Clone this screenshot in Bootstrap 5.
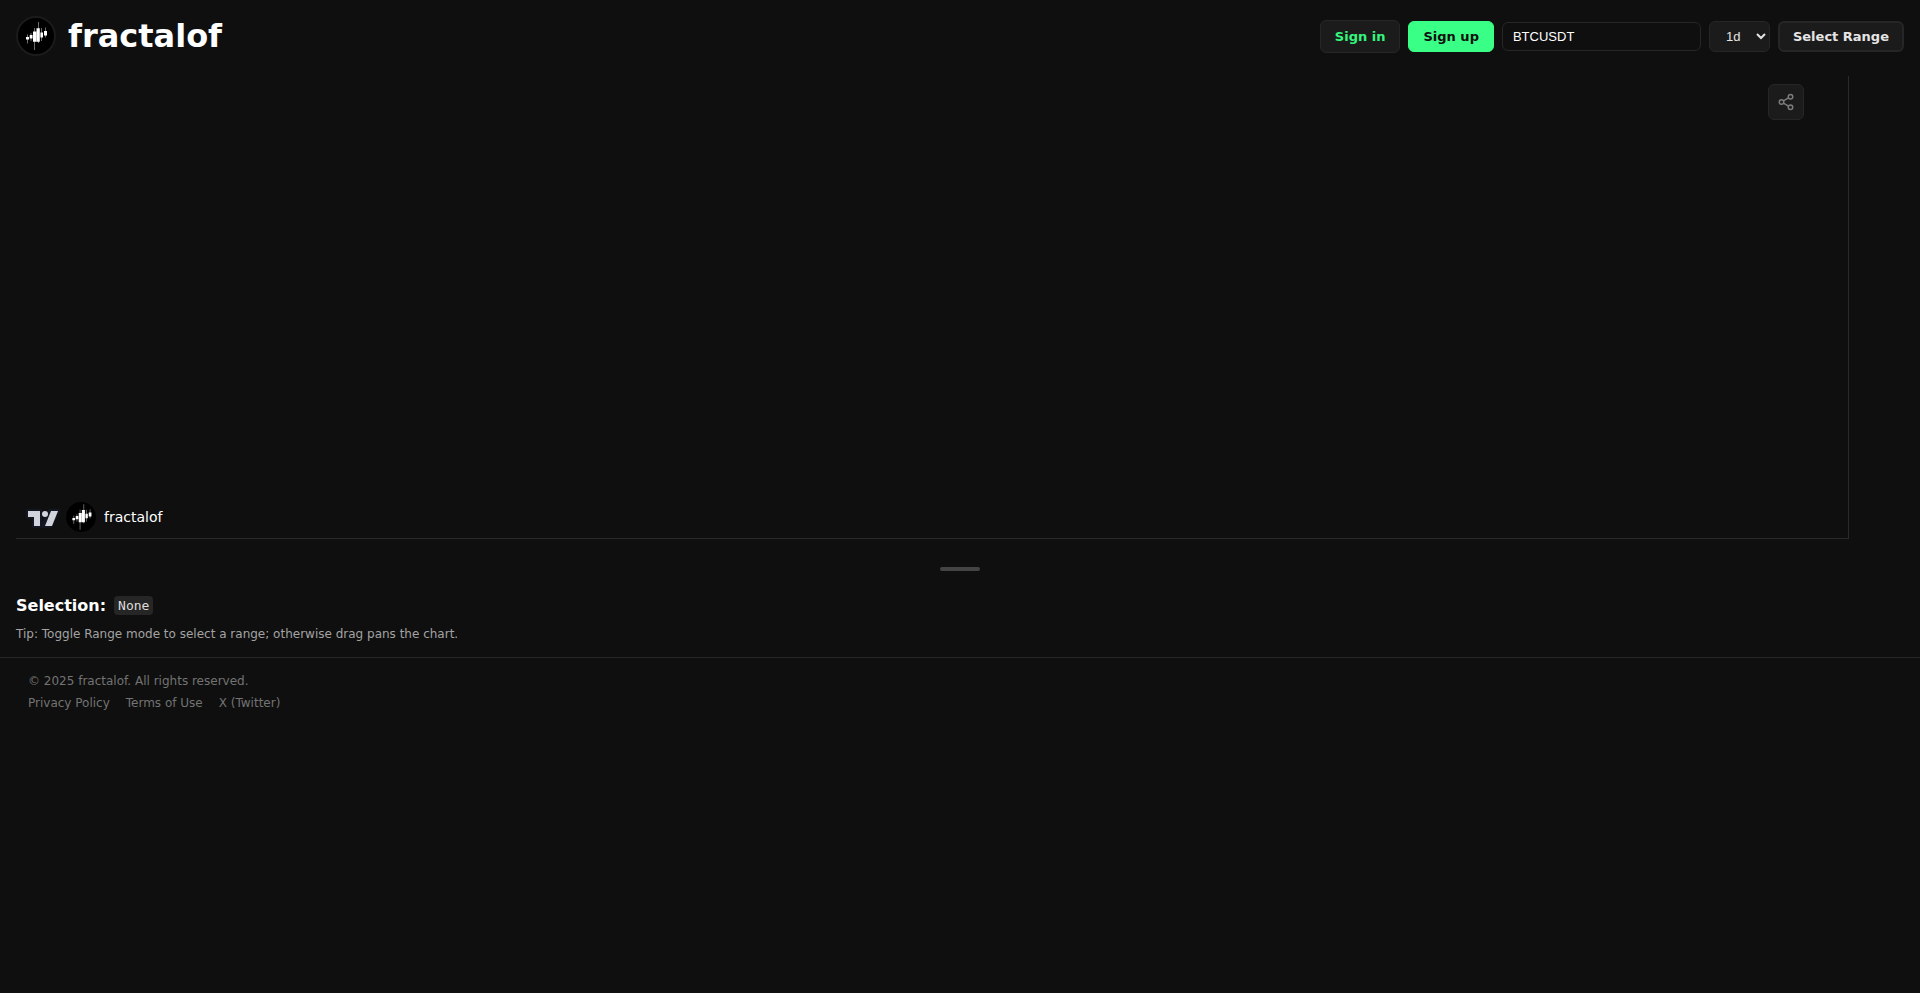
<!DOCTYPE html>
<html lang="en">
<head>
<meta charset="utf-8">
<meta name="viewport" content="width=device-width, initial-scale=1">
<title>fractalof</title>
<link href="https://cdn.jsdelivr.net/npm/bootstrap@5.3.0/dist/css/bootstrap.min.css" rel="stylesheet">
<style>
  body { background: #0f0f0f; color: #fff; font-family: "DejaVu Sans", sans-serif; font-size: 14px; }
  .brand-name { font-size: 32px; line-height: 40px; }
  .brand-ring { border: 2px solid #1b1b1b; background: #000; width: 40px; height: 40px; }
  .tool { --bs-btn-font-size: 13px; --bs-btn-font-weight: 700; --bs-btn-line-height: 15px; --bs-btn-border-radius: 6px;
    --bs-btn-padding-x: 14px; --bs-btn-padding-y: 8px; border-color: #262626; background: #1b1b1b; color: #e5e5e5; }
  .tool:hover { background: #262626; color: #fff; }
  .tool-signin { color: #34f57e; }
  .tool-signup { --bs-btn-padding-y: 7px; background: #3aff87; border-color: #3aff87; color: #0f0f0f; }
  .tool-range { --bs-btn-padding-x: 13px; --bs-btn-padding-y: 6px; border-width: 2px; }
  .symbol-box { width: 199px; height: 29px; padding: 6px 10px; font: 13px "Liberation Sans", sans-serif; border-radius: 6px; background: #0f0f0f; border: 1px solid #262626; color: #fff; }
  .interval-box { width: 61px; height: 31px; padding: 0 0 0 12px; font: 13px "Liberation Sans", sans-serif; border-radius: 6px; background: #1b1b1b; border: 1px solid #262626; color: #e5e5e5; }
  .chart-wrap { padding: 4px 71px 0 16px; }
  .chart-pane { height: 463px; border-right: 1px solid #2a2a2a; border-bottom: 1px solid #2a2a2a; }
  .share-btn { width: 36px; height: 36px; border-radius: 6px; border: 1px solid #262626; background: #1b1b1b; color: #7b7b7b; top: 8px; right: 44px; }
  .watermark { left: 10px; bottom: 6px; }
  .splitter { height: 4px; width: 40px; border-radius: 2px; background: #444; margin-top: 28px; }
  .selection { padding: 22px 16px 0; font-size: 16px; line-height: 25px; }
  .selection code { font: 13px/15px "DejaVu Sans Mono", monospace; background: #262626; color: #ddd; padding: 2px 4px; border-radius: 4px; }
  .tip { font-size: 12px; line-height: 18px; color: #a3a3a3; padding: 7px 16px 14px; }
  .site-foot { border-top: 1px solid #262626; padding: 12px 28px; font-size: 12px; line-height: 22px; color: #737373; }
  .site-foot a { color: #737373; text-decoration: none; }
</style>
</head>
<body>
<svg class="d-none" aria-hidden="true">
  <symbol id="candles" viewBox="0 0 40 40">
    <path stroke="#888" stroke-width=".8" d="M11.5 18.5v9M15 17v8M18.5 12v22M22.5 6v21M25.5 12v13M29.5 11.500v10"/>
    <path fill="#fff" d="M10 21h3v2.500h-3zM13.700 19h2.800v3.500h-2.800zM17 15.500h3.300v10.300H17zM20.500 12.300h3.300v13.500h-3.300zM24.400 16.500h2.600v5h-2.600zM28 15h3v4.500h-3z"/>
  </symbol>
</svg>

<header class="d-flex align-items-center justify-content-between p-3">
  <div class="d-flex align-items-center">
    <svg class="brand-ring rounded-circle me-2" viewBox="2 2 36 36" role="img" aria-label="fractalof logo"><use href="#candles" width="40" height="40"/></svg>
    <h1 class="brand-name fw-bold mb-0 ms-1">fractalof</h1>
  </div>
  <div class="d-flex align-items-center gap-2">
    <button type="button" class="btn tool tool-signin">Sign in</button>
    <button type="button" class="btn tool tool-signup">Sign up</button>
    <input type="text" class="symbol-box" value="BTCUSDT" aria-label="Symbol">
    <select class="interval-box" aria-label="Interval"><option>1h</option><option>4h</option><option selected>1d</option></select>
    <button type="button" class="btn tool tool-range">Select Range</button>
  </div>
</header>

<main>
  <div class="chart-wrap">
    <div class="chart-pane position-relative">
      <button type="button" class="share-btn position-absolute p-0 d-flex align-items-center justify-content-center" aria-label="Share">
        <svg width="18" height="18" viewBox="0 0 24 24" fill="none" stroke="currentColor" stroke-width="2"><circle cx="18" cy="5" r="3"/><circle cx="6" cy="12" r="3"/><circle cx="18" cy="19" r="3"/><path d="M8.600 13.500l6.800 4M15.400 6.500l-6.800 4"/></svg>
      </button>
      <div class="watermark position-absolute d-flex align-items-center">
        <a href="#" class="d-flex" aria-label="TradingView"><svg width="36" height="22" viewBox="0 -3 36 22"><path fill="#131722" stroke="#131722" stroke-width="4" stroke-linejoin="round" d="M2 2h12v15H8V8H2zM24 17h-7l6-15h9z"/><path fill="#d1d4dc" d="M2 2h12v15H8V8H2z"/><circle cx="19" cy="5" r="3" fill="#d1d4dc"/><path fill="#d1d4dc" d="M26 17h-7l6-15h7z"/></svg></a>
        <svg class="rounded-circle bg-black ms-1 me-2" width="30" height="30" viewBox="3 3.500 33 33" aria-hidden="true"><use href="#candles" width="40" height="40"/></svg>
        <span>fractalof</span>
      </div>
    </div>
  </div>
  <div class="splitter mx-auto" role="separator"></div>
  <div class="selection d-flex align-items-center gap-2"><strong>Selection:</strong><code>None</code></div>
  <p class="tip mb-0">Tip: Toggle Range mode to select a range; otherwise drag pans the chart.</p>
</main>

<footer class="site-foot">
  <div>© 2025 fractalof. All rights reserved.</div>
  <nav class="d-flex gap-3"><a href="#">Privacy Policy</a><a href="#">Terms of Use</a><a href="#">X (Twitter)</a></nav>
</footer>
<script src="https://cdn.jsdelivr.net/npm/bootstrap@5.3.0/dist/js/bootstrap.bundle.min.js"></script>
</body>
</html>
